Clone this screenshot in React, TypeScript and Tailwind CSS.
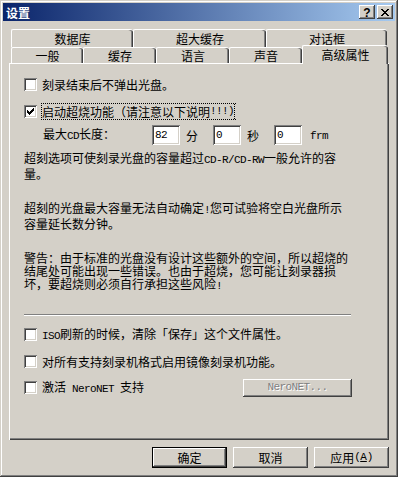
import React from "react";

const raised =
  "shadow-[inset_-1px_-1px_#404040,inset_1px_1px_#ffffff,inset_-2px_-2px_#808080,inset_2px_2px_#d4d0c8]";
const sunken =
  "shadow-[inset_1px_1px_#808080,inset_-1px_-1px_#ffffff,inset_2px_2px_#404040,inset_-2px_-2px_#d4d0c8]";

function L({ children }: { children: React.ReactNode }) {
  return (
    <span className="font-['Liberation_Mono',monospace] text-[11px] tracking-[-0.6px] whitespace-pre">
      {children}
    </span>
  );
}

function Box({ checked }: { checked?: boolean }) {
  return (
    <div
      className={`w-[13px] h-[13px] bg-white shrink-0 flex items-center justify-center ${sunken}`}
    >
      {checked && (
        <svg width="7" height="7" shapeRendering="crispEdges">
          {[2, 3, 4, 3, 2, 1, 0].map((y, i) => (
            <rect key={i} x={i} y={y} width={1} height={3} fill="#000" />
          ))}
        </svg>
      )}
    </div>
  );
}

function BackTab({ w, children }: { w: number; children: React.ReactNode }) {
  return (
    <div
      style={{ width: w }}
      className="h-[18px] shrink-0 border-l border-t border-white rounded-tl-[2px] rounded-tr-[3px] shadow-[inset_-1px_0_#404040,inset_-2px_0_#808080] flex items-center justify-center"
    >
      {children}
    </div>
  );
}

function FrontTab({ w, children }: { w: number; children: React.ReactNode }) {
  return (
    <div
      style={{ width: w }}
      className="h-[16px] shrink-0 border-l border-t border-white rounded-tl-[2px] rounded-tr-[3px] shadow-[inset_-1px_0_#404040,inset_-2px_0_#808080] flex items-center justify-center"
    >
      {children}
    </div>
  );
}

function Input({ value }: { value: string }) {
  return (
    <div className={`w-[28px] h-[20px] bg-white shrink-0 flex items-center pl-[3px] ${sunken}`}>
      <L>{value}</L>
    </div>
  );
}

export default function App() {
  return (
    <div className="w-[398px] h-[477px] bg-[#d4d0c8] p-[3px] shadow-[inset_-1px_-1px_#404040,inset_1px_1px_#d4d0c8,inset_-2px_-2px_#808080,inset_2px_2px_#ffffff] font-['Noto_Sans_CJK_SC',sans-serif] text-[12px] leading-[13px] text-black flex flex-col overflow-hidden">
      {/* Title bar */}
      <div className="h-[18px] shrink-0 bg-[linear-gradient(to_right,#0a246a,#a6caf0)] flex items-center pl-[3px] pr-[2px]">
        <span className="text-white font-bold text-[12px]">设置</span>
        <div className="ml-auto flex gap-[2px]">
          <div className={`w-[16px] h-[14px] bg-[#d4d0c8] flex items-center justify-center ${raised}`}>
            <span className="font-['Liberation_Sans',sans-serif] font-bold text-[12px] leading-[12px] mt-[1px]">?</span>
          </div>
          <div className={`w-[16px] h-[14px] bg-[#d4d0c8] flex items-center justify-center ${raised}`}>
            <svg width="8" height="7" shapeRendering="crispEdges">
              {[0, 1, 2, 3, 4, 5, 6].map((i) => (
                <React.Fragment key={i}>
                  <rect x={i} y={i} width={2} height={1} fill="#000" />
                  <rect x={6 - i} y={i} width={2} height={1} fill="#000" />
                </React.Fragment>
              ))}
            </svg>
          </div>
        </div>
      </div>

      {/* Tabs */}
      <div className="mt-[8px] ml-[6px] w-[380px] pl-[2px] flex flex-col shrink-0">
        <div className="flex">
          <BackTab w={122}>数据库</BackTab>
          <BackTab w={133}>超大缓存</BackTab>
          <BackTab w={121}>对话框</BackTab>
        </div>
        <div className="flex items-end h-[16px] relative z-10">
          <FrontTab w={72}>一般</FrontTab>
          <FrontTab w={73}>缓存</FrontTab>
          <FrontTab w={73}>语言</FrontTab>
          <FrontTab w={73}>声音</FrontTab>
          <div className="w-[86px] h-[19px] mb-[-1px] shrink-0 bg-[#d4d0c8] border-l border-t border-white rounded-tl-[2px] rounded-tr-[3px] shadow-[inset_-1px_0_#404040,inset_-2px_0_#808080] flex items-center justify-center pb-[2px]">
            高级属性
          </div>
        </div>
      </div>

      {/* Panel */}
      <div className="ml-[6px] w-[380px] h-[377px] shrink-0 shadow-[inset_1px_1px_#ffffff,inset_-1px_-1px_#404040,inset_-2px_-2px_#808080] pl-[15px] pt-[15px] flex flex-col">
        <div className="h-[13px] flex items-center">
          <Box />
          <span className="ml-[5px] whitespace-nowrap">刻录结束后不弹出光盘。</span>
        </div>
        <div className="h-[13px] mt-[14px] flex items-center">
          <Box checked />
          <span className="ml-[4px] h-[17px] border border-dotted border-black border-r-0 pr-[1px] flex items-center whitespace-nowrap">
            <span className="border-r border-dotted border-black h-[15px] flex items-center">
              启动超烧功能（请注意以下说明<L>!!!)</L>
            </span>
          </span>
        </div>
        <div className="h-[20px] mt-[7px] flex items-center">
          <span className="ml-[19px] w-[109px] whitespace-nowrap">
            最大<L>CD</L>长度：
          </span>
          <Input value="82" />
          <span className="ml-[6px]">分</span>
          <div className="ml-[15px]">
            <Input value="0" />
          </div>
          <span className="ml-[6px]">秒</span>
          <div className="ml-[15px]">
            <Input value="0" />
          </div>
          <span className="ml-[8px]">
            <L>frm</L>
          </span>
        </div>

        <p className="mt-[6px] whitespace-nowrap">
          超刻选项可使刻录光盘的容量超过<L>CD-R/CD-RW</L>一般允许的容
          <br />
          量。
        </p>
        <p className="mt-[21px] whitespace-nowrap">
          超刻的光盘最大容量无法自动确定<L>!</L>您可试验将空白光盘所示
          <br />
          容量延长数分钟。
        </p>
        <p className="mt-[21px] whitespace-nowrap">
          警告：由于标准的光盘没有设计这些额外的空间，所以超烧的
          <br />
          结尾处可能出现一些错误。也由于超烧，您可能让刻录器损
          <br />
          坏，要超烧则必须自行承担这些风险<L>!</L>
        </p>

        <div className="mt-[21px] w-[327px] h-[2px] border-t border-b border-t-[#808080] border-b-white" />

        <div className="h-[13px] mt-[12px] flex items-center">
          <Box />
          <span className="ml-[5px] whitespace-nowrap">
            <L>ISO</L>刷新的时候，清除「保存」这个文件属性。
          </span>
        </div>
        <div className="h-[13px] mt-[14px] flex items-center">
          <Box />
          <span className="ml-[5px] whitespace-nowrap">对所有支持刻录机格式启用镜像刻录机功能。</span>
        </div>
        <div className="h-[13px] mt-[13px] flex items-center">
          <Box />
          <span className="ml-[5px] w-[201px] whitespace-nowrap">
            激活<L> NeroNET </L>支持
          </span>
          <div className={`w-[109px] h-[18px] shrink-0 flex items-center justify-center text-[#808080] [text-shadow:1px_1px_0_#ffffff] ${raised}`}>
            <L>NeroNET...</L>
          </div>
        </div>
      </div>

      {/* Buttons */}
      <div className="mt-[7px] flex justify-end gap-[6px] pr-[6px] shrink-0">
        <div className="w-[75px] h-[21px] border border-black">
          <div className={`w-full h-full flex items-center justify-center ${raised}`}>确定</div>
        </div>
        <div className={`w-[75px] h-[21px] flex items-center justify-center ${raised}`}>取消</div>
        <div className={`w-[75px] h-[21px] flex items-center justify-center ${raised}`}>
          应用<L>(</L>
          <span className="font-['Liberation_Mono',monospace] text-[11px] underline">A</span>
          <L>)</L>
        </div>
      </div>
    </div>
  );
}
